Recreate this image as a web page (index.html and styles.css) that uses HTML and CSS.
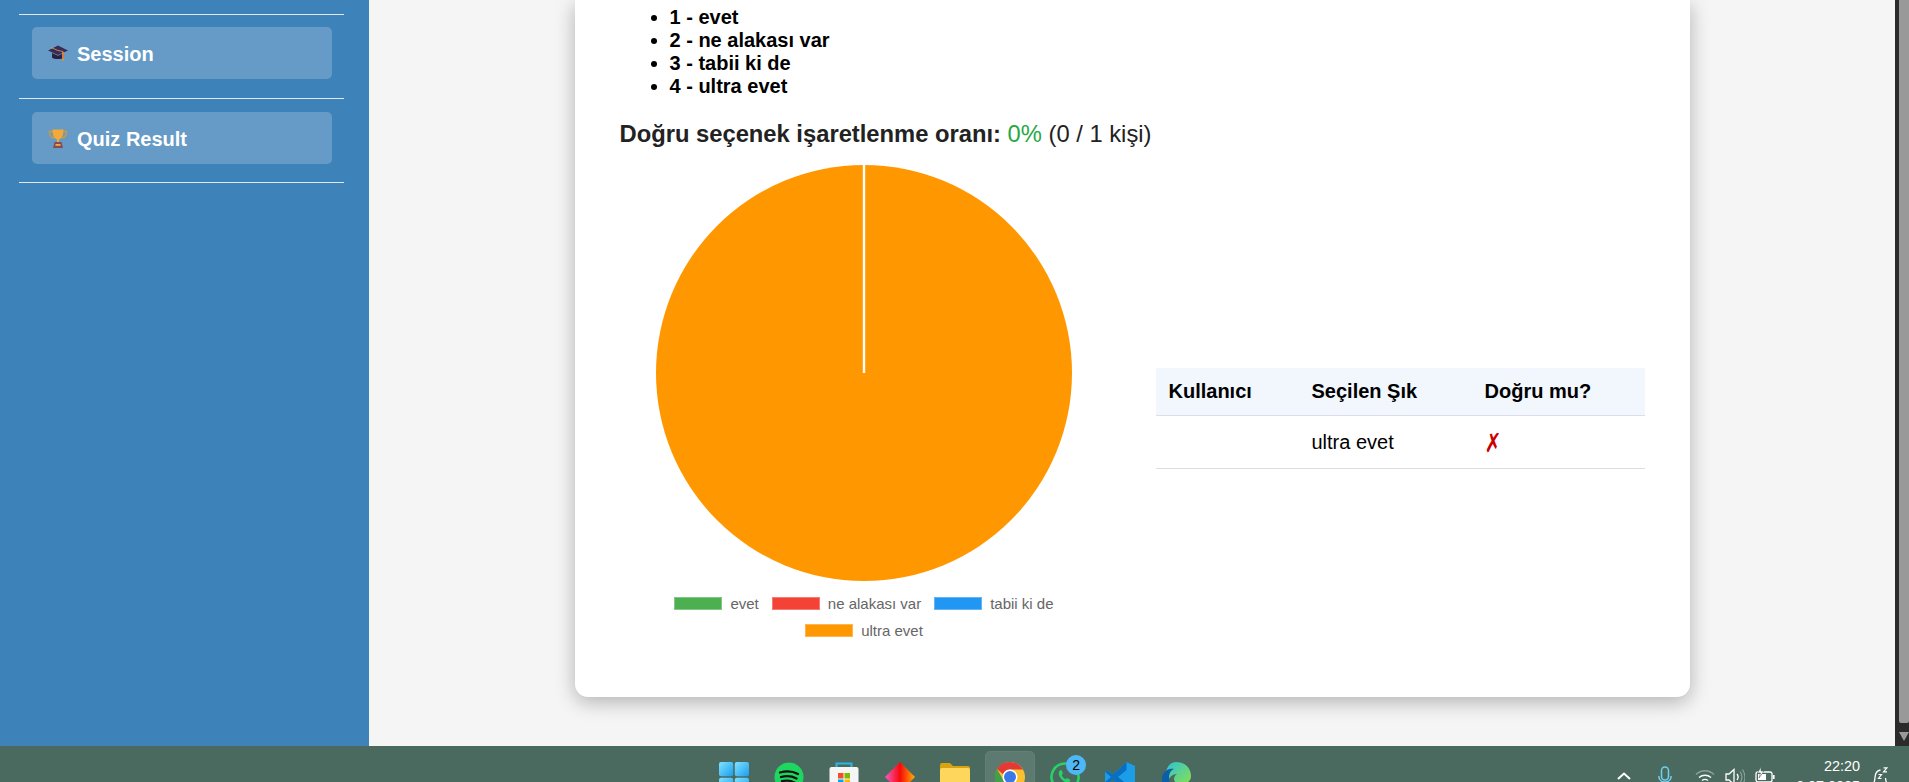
FILE: index.html
```html
<!DOCTYPE html>
<html lang="tr">
<head>
  <meta charset="UTF-8">
  <title>Quiz Result</title>
  <link rel="stylesheet" href="styles.css">
</head>
<body>
  <div class="screen">
    <aside class="sidebar">
      <hr class="rule">
      <a class="nav-item">
        <svg class="nav-icon" viewBox="0 0 20 20"><path d="M10 2.500 20 7.500 10 12 0 7.500z" fill="#3a2a55"/><path d="M4 10v4.500c2 2 10 2 12 0V10l-6 2.800z" fill="#2a2140"/><path d="M3 4.500 10 7.500l5 1v6" fill="none" stroke="#d9a441" stroke-width=".8"/><rect x="14.200" y="9" width="1.600" height="9" rx=".8" fill="#f08a3c"/></svg>
        <span>Session</span>
      </a>
      <hr class="rule">
      <a class="nav-item">
        <svg class="nav-icon" viewBox="0 0 20 20"><path d="M4.500 3.500H1.500c0 4 1.500 6 4.500 6.500M15.500 3.500h3c0 4-1.500 6-4.500 6.500" fill="none" stroke="#d99a2b" stroke-width="1.300"/><path d="M4.500 1.500h11c0 6-1.500 9-4.500 10v2.500H9V11.500c-3-1-4.500-4-4.500-10z" fill="#f4aa35"/><path d="M6.500 14h7l1.500 6H5z" fill="#8a4a55"/><rect x="7.500" y="16" width="5" height="1.800" fill="#e8b04a"/></svg>
        <span>Quiz Result</span>
      </a>
      <hr class="rule">
    </aside>

    <main class="content">
      <section class="card">
        <ul class="options">
          <li>1 - evet</li>
          <li>2 - ne alakası var</li>
          <li>3 - tabii ki de</li>
          <li>4 - ultra evet</li>
        </ul>
        <h3 class="rate"><b>Doğru seçenek işaretlenme oranı:</b> <span class="rate-value">0%</span> (0 / 1 kişi)</h3>
        <div class="result">
          <div class="chart">
            <svg class="pie" viewBox="0 0 416 416">
              <circle cx="208" cy="208" r="208" fill="#ff9800"/>
              <line x1="208" y1="0" x2="208" y2="208" stroke="#fff" stroke-width="2.400"/>
            </svg>
            <div class="legend">
              <span class="legend-item"><i class="swatch swatch-green"></i>evet</span>
              <span class="legend-item"><i class="swatch swatch-red"></i>ne alakası var</span>
              <span class="legend-item"><i class="swatch swatch-blue"></i>tabii ki de</span>
              <span class="legend-item"><i class="swatch swatch-orange"></i>ultra evet</span>
            </div>
          </div>
          <div class="answers">
            <table>
              <thead>
                <tr><th class="col-user">Kullanıcı</th><th class="col-choice">Seçilen Şık</th><th>Doğru mu?</th></tr>
              </thead>
              <tbody>
                <tr><td></td><td>ultra evet</td><td><span class="wrong">✗</span></td></tr>
              </tbody>
            </table>
          </div>
        </div>
      </section>
    </main>

    <div class="scrollbar">
      <div class="scroll-thumb"></div>
      <div class="scroll-arrow"></div>
    </div>
  </div>

  <footer class="taskbar">
    <div class="apps">
      <svg class="app" viewBox="0 0 30 30"><defs><linearGradient id="win" x1="0" y1="0" x2="1" y2="1"><stop offset="0" stop-color="#7fe4ff"/><stop offset="1" stop-color="#1b9df0"/></linearGradient></defs><rect x="0" y="0" width="14.200" height="14.200" rx="2" fill="url(#win)"/><rect x="15.800" y="0" width="14.200" height="14.200" rx="2" fill="url(#win)"/><rect x="0" y="15.800" width="14.200" height="14.200" rx="2" fill="url(#win)"/><rect x="15.800" y="15.800" width="14.200" height="14.200" rx="2" fill="url(#win)"/></svg>
      <svg class="app" viewBox="0 0 30 30"><circle cx="15" cy="15" r="14.500" fill="#1ed760"/><path d="M6 10.500c6-1.700 13-1.200 18 1.500M7 15c5-1.300 11-.9 15.500 1.500M8 19.200c4-1 9-.7 12.500 1.300" fill="none" stroke="#111" stroke-width="2.300" stroke-linecap="round"/></svg>
      <svg class="app" viewBox="0 0 30 30"><path d="M7.500 6V1.500h15V6" fill="none" stroke="#29b6ea" stroke-width="2"/><rect x="0.500" y="5" width="29" height="25" rx="2" fill="#f5f5f5"/><rect x="9" y="11" width="5.500" height="5.500" fill="#f25022"/><rect x="15.500" y="11" width="5.500" height="5.500" fill="#7fba00"/><rect x="9" y="17.500" width="5.500" height="5.500" fill="#00a4ef"/><rect x="15.500" y="17.500" width="5.500" height="5.500" fill="#ffb900"/></svg>
      <svg class="app" viewBox="0 0 30 30"><defs><linearGradient id="gem" x1="0" y1="0" x2="1" y2="0"><stop offset="0" stop-color="#f45ac8"/><stop offset=".5" stop-color="#f60a0a"/><stop offset="1" stop-color="#ffb000"/></linearGradient></defs><path d="M15 0 30 15 15 30 0 15z" fill="url(#gem)"/></svg>
      <svg class="app" viewBox="0 0 30 30"><path d="M0 3a2 2 0 0 1 2-2h8l3 3h15a2 2 0 0 1 2 2v4H0z" fill="#d9a210"/><rect x="0" y="6" width="30" height="24" rx="2" fill="#ffd65c"/></svg>
      <span class="app-tile">
        <svg class="app" viewBox="0 0 30 30"><circle cx="15" cy="15" r="15" fill="#fbc02d"/><path d="M15 0a15 15 0 0 1 13 7.500H15a7.500 7.500 0 0 0-7 4.800L2 7A15 15 0 0 1 15 0z" fill="#e53935"/><path d="M2 7l6.500 11.200a7.500 7.500 0 0 0 6 4.300L10 30A15 15 0 0 1 2 7z" fill="#43a047"/><circle cx="15" cy="15" r="7.500" fill="#fff"/><circle cx="15" cy="15" r="6" fill="#3b78e7"/></svg>
      </span>
      <span class="app-badged">
        <svg class="app" viewBox="0 0 30 30"><path d="M15 1.500A13.500 13.500 0 0 0 3.500 22L1.500 28.500 8 26.500A13.500 13.500 0 1 0 15 1.500z" fill="none" stroke="#25d366" stroke-width="2.600"/><path d="M10 8.500c-2 1.500-1.500 4.500.5 7.500 2.500 3.500 6 5.500 8.500 4.500l1.500-2.500-3.500-2-1.500 1.300c-2-1-3-2.500-3.800-4.300l1.300-1.500L11.500 8z" fill="#25d366"/></svg>
        <span class="badge">2</span>
      </span>
      <svg class="app" viewBox="0 0 30 30"><path d="M21.500 0 30 4v22l-8.500 4L8 17.500l-5 4-3-1.500V10l3-1.500 5 4z" fill="#1b9de8"/><path d="M21.500 0v8L13 15l8.500 7v8L8 17.500l-5 4-3-1.500 6-5-6-5 3-1.500 5 4z" fill="#0a6fc0"/></svg>
      <svg class="app" viewBox="0 0 30 30"><defs><linearGradient id="edge" x1="0" y1="0" x2="1" y2="1"><stop offset="0" stop-color="#2cc2d8"/><stop offset="1" stop-color="#8ae04c"/></linearGradient></defs><path d="M15 0c9 0 15 6 15 14 0 5-4 8-9 8-5 0-8-2-8-5 0-2 1-4 3-5-5 0-9 4-9 10C2 10 7 0 15 0z" fill="url(#edge)"/><path d="M1 15C3 8 9 6 13 7c-3 1-5 4-5 9 0 6 5 12 12 13-2 .7-4 1-5 1C7 30 0 24 1 15z" fill="#0c5ea8"/></svg>
    </div>
    <div class="tray">
      <svg class="tray-chevron" viewBox="0 0 14 8"><path d="M1 7 7 1.500 13 7" fill="none" stroke="#fff" stroke-width="2"/></svg>
      <svg class="tray-mic" viewBox="0 0 14 22"><rect x="3.500" y="1" width="7" height="13" rx="3.500" fill="none" stroke="#6fd0f0" stroke-width="1.500"/><path d="M.8 10c0 8 12.400 8 12.400 0M7 16v6" fill="none" stroke="#6fd0f0" stroke-width="1.500"/></svg>
      <svg class="tray-wifi" viewBox="0 0 20 16"><path d="M1 6.500c5-5 13-5 18 0" fill="none" stroke="#8aa399" stroke-width="1.400"/><path d="M4 9.500c3.500-3 8.500-3 12 0M7 12.500c2-1.500 4-1.500 6 0" fill="none" stroke="#fff" stroke-width="1.400"/></svg>
      <svg class="tray-sound" viewBox="0 0 20 18"><path d="M1 6h3l5-4.500v15L4 12H1z" fill="none" stroke="#fff" stroke-width="1.300"/><path d="M12 6c1.500 2 1.500 4 0 6" fill="none" stroke="#fff" stroke-width="1.300"/><path d="M15 3.500c2.500 3.500 2.500 7.500 0 11M17.500 1.500c3 4.500 3 10.500 0 15" fill="none" stroke="#8aa399" stroke-width="1.200"/></svg>
      <svg class="tray-battery" viewBox="0 0 20 16"><rect x="1" y="5" width="16" height="10" rx="2" fill="none" stroke="#fff" stroke-width="1.300"/><rect x="3" y="7" width="8" height="6" fill="#fff"/><rect x="17.800" y="8" width="1.800" height="4" fill="#fff"/><path d="M6 0 2.500 6h3L4 11l5-7H6z" fill="#fff" stroke="#4b6a5f" stroke-width=".6"/></svg>
      <div class="clock"><div>22:20</div><div>6.07.2025</div></div>
      <svg class="tray-bell" viewBox="0 0 16 20"><path d="M1 17c1.500-1.500 1.800-3.500 2-6.500C3.300 6 5 3.500 8.500 3M13.500 11c.2 2.500.6 4.500 1.800 6M1 17h14.300" fill="none" stroke="#fff" stroke-width="1.300"/><path d="M6.500 7.500h3l-3 4h3M11.500 .8h3.500l-3.500 4h3.500" fill="none" stroke="#fff" stroke-width="1.200"/></svg>
    </div>
  </footer>
</body>
</html>
```

FILE: styles.css
```css
* {
  box-sizing: border-box;
}
html, body {
  margin: 0;
  height: 100%;
  overflow: hidden;
  font-family: "Liberation Sans", Arial, sans-serif;
}
.screen {
  display: flex;
  height: 746px;
}

/* sidebar */
.sidebar {
  flex: 0 0 369px;
  background: #3d82b8;
  padding: 14px 25px 0 19px;
}
.rule {
  margin: 0;
  border: 0;
  border-top: 1px solid #dfe9f1;
}
.nav-item {
  display: flex;
  align-items: center;
  gap: 9px;
  height: 52px;
  margin: 12px 12px 19px 13px;
  padding-left: 16px;
  border-radius: 5px;
  background: #659bc6;
  color: #fff;
  font-size: 20px;
  font-weight: bold;
}
.nav-item + .rule + .nav-item {
  margin-top: 13px;
  margin-bottom: 18px;
}
.nav-item span {
  padding-top: 2px;
}
.nav-icon {
  width: 20px;
  height: 20px;
}

/* main */
.content {
  flex: 1;
  background: #f5f5f5;
  display: flex;
  justify-content: center;
  align-items: flex-start;
}
.card {
  width: 1115px;
  height: 697px;
  padding: 6px 45px 0;
  background: #fff;
  border-radius: 0 0 13px 13px;
  box-shadow: 0 5px 20px rgba(0, 0, 0, 0.28);
}
.options {
  margin: 0;
  padding-left: 50px;
  font-size: 20px;
  font-weight: bold;
  color: #000;
}
.rate {
  margin: 22px 0 0;
  font-size: 23.76px;
  font-weight: normal;
  color: #222;
}
.rate-value {
  color: #28a745;
}
.result {
  display: flex;
  gap: 47px;
  margin-top: 17px;
}
.chart {
  flex: 1;
  display: flex;
  flex-direction: column;
  align-items: center;
}
.pie {
  width: 416px;
  height: 416px;
  display: block;
}
.legend {
  display: flex;
  flex-wrap: wrap;
  justify-content: center;
  gap: 14px 13px;
  width: 400px;
  margin-top: 16px;
  font-size: 15px;
  color: #666;
}
.legend-item {
  display: flex;
  align-items: center;
  gap: 8px;
  height: 13px;
}
.swatch {
  width: 48px;
  height: 13px;
  border: 1px solid rgba(255, 255, 255, 0.3);
}
.swatch-green { background: #4caf50; }
.swatch-red { background: #f44336; }
.swatch-blue { background: #2196f3; }
.swatch-orange { background: #ff9800; }

.answers {
  flex: 1;
  padding-top: 203px;
}
table {
  width: 100%;
  border-collapse: collapse;
  font-size: 20px;
  color: #000;
}
th, td {
  padding: 12px 13px;
  text-align: left;
  border-bottom: 1px solid #dde;
}
th {
  background: #f2f6fd;
}
td {
  border-bottom-color: #ddd;
  height: 53px;
}
.col-user { width: 143px; }
.col-choice { width: 173px; }
.wrong {
  display: inline-block;
  font-family: "DejaVu Sans", sans-serif;
  font-size: 24px;
  line-height: 23px;
  color: #c00;
  transform: translate(-2px, 2px) scale(0.85, 1.1);
}

/* fake scrollbar of the window */
.scrollbar {
  flex: 0 0 14px;
  background: #2b2b2b;
  padding-left: 4px;
}
.scroll-thumb {
  height: 723px;
  background: #999;
  border-radius: 0 0 2px 2px;
}
.scroll-arrow {
  width: 0;
  margin-top: 9px;
  border-left: 5px solid transparent;
  border-right: 5px solid transparent;
  border-top: 9px solid #999;
}

/* windows taskbar, cut off by the bottom of the window */
.taskbar {
  display: flex;
  height: 36px;
  overflow: hidden;
  padding-left: 719px;
  background: #4b6a5f;
}
.apps {
  display: flex;
  align-items: flex-start;
  gap: 25.2px;
  padding-top: 16px;
}
.app {
  display: block;
  width: 30px;
  height: 30px;
}
.app-tile {
  margin: -11px -10px 0;
  padding: 10px 9px;
  height: 60px;
  border: 1px solid #667f76;
  background: #5d7a70;
  border-radius: 5px;
}
.app-badged {
  position: relative;
}
.badge {
  position: absolute;
  top: -7px;
  left: 16px;
  width: 20px;
  height: 20px;
  border-radius: 50%;
  background: #4db8f5;
  color: #000;
  font-size: 14px;
  line-height: 20px;
  text-align: center;
}
.tray {
  display: flex;
  align-items: flex-start;
  margin-left: auto;
  padding-right: 21px;
  color: #fff;
}
.tray-chevron { width: 14px; height: 8px; margin: 26px 27px 0 0; }
.tray-mic { width: 14px; height: 22px; margin: 20px 23px 0 0; }
.tray-wifi { width: 20px; height: 16px; margin: 22px 10px 0 0; }
.tray-sound { width: 20px; height: 18px; margin: 22px 10px 0 0; }
.tray-battery { width: 20px; height: 16px; margin: 21px 0 0 0; }
.clock {
  width: 85px;
  padding-top: 10px;
  font-size: 14.4px;
  line-height: 20px;
  text-align: right;
}
.tray-bell { width: 16px; height: 20px; margin: 21px 0 0 12px; }
```
